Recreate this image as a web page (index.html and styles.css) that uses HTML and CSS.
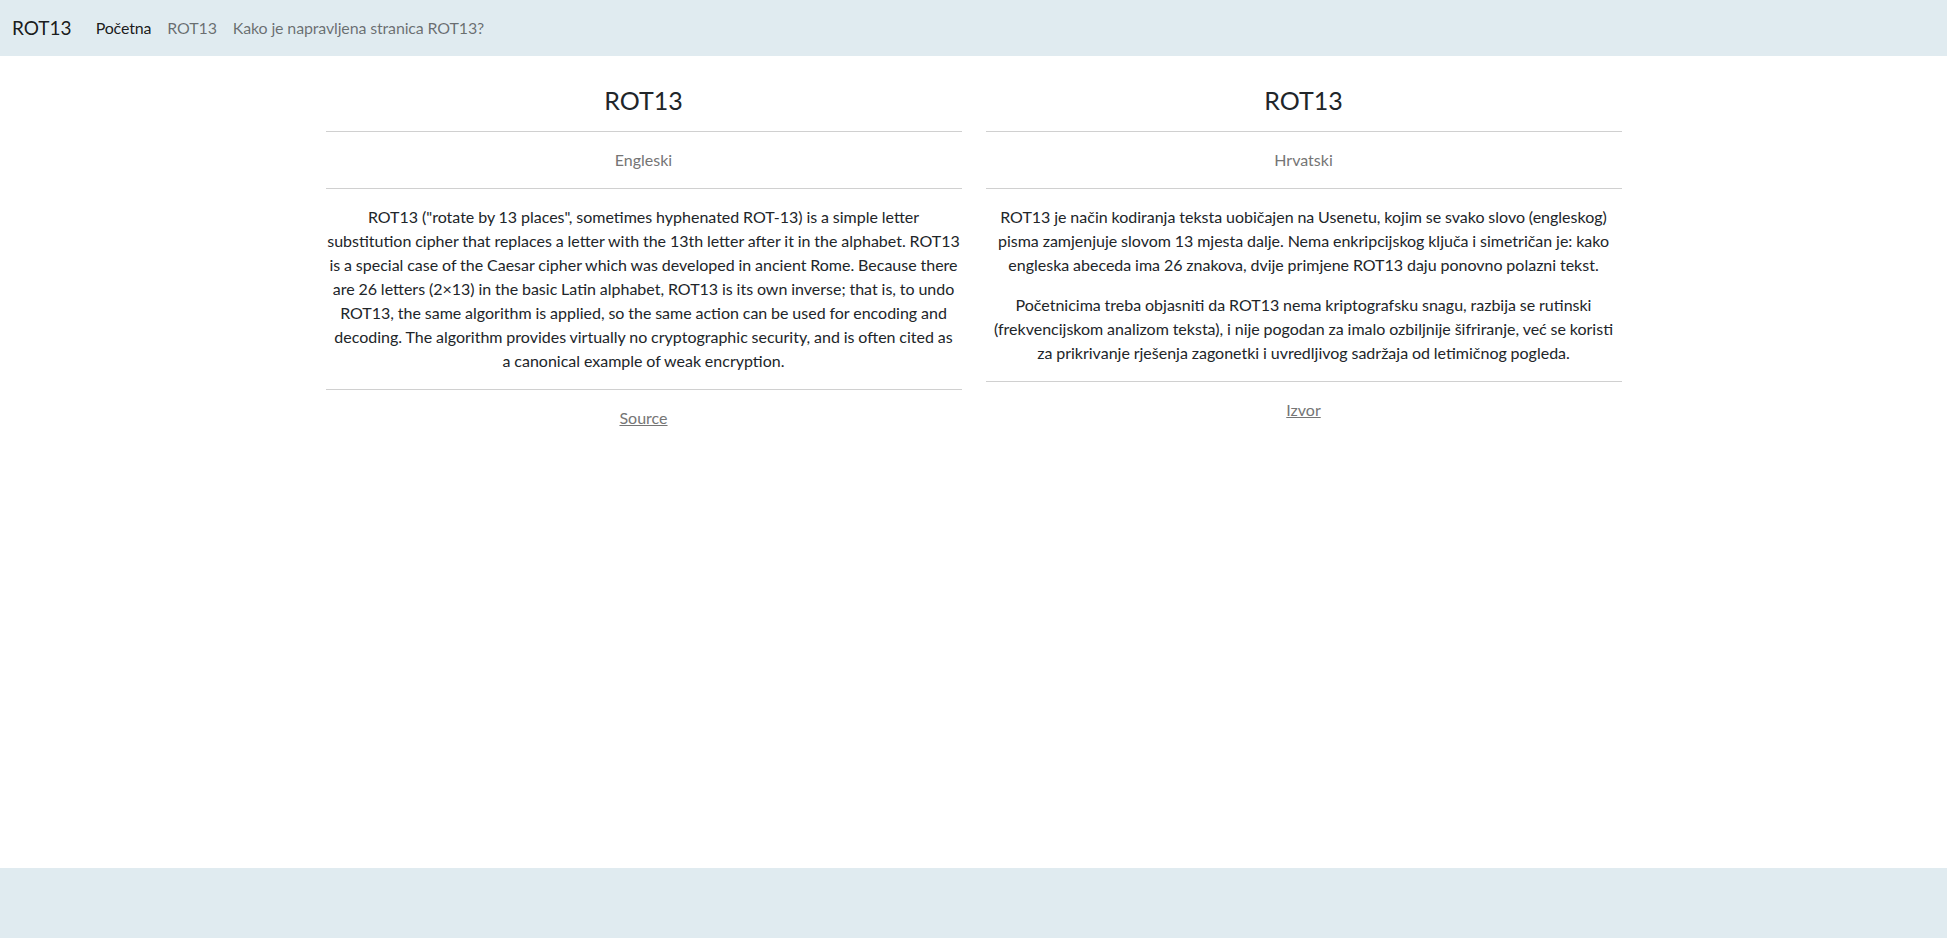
FILE: index.html
```html
<!DOCTYPE html>
<html lang="hr">
<head>
    <meta charset="UTF-8">
    <meta name="viewport" content="width=device-width, initial-scale=1.0">
    <title>ROT13</title>
    <link rel="stylesheet" href="styles.css">
</head>
<body>
    <nav class="navbar">
        <a class="brand" href="#">ROT13</a>
        <ul class="nav-links">
            <li><a class="nav-link active" href="#">Početna</a></li>
            <li><a class="nav-link" href="#">ROT13</a></li>
            <li><a class="nav-link" href="#">Kako je napravljena stranica ROT13?</a></li>
        </ul>
    </nav>

    <main class="container">
        <div class="row">
            <section class="col">
                <h3>ROT13</h3>
                <hr>
                <p class="lang">Engleski</p>
                <hr>
                <p class="text">ROT13 ("rotate by 13 places", sometimes hyphenated ROT-13) is a simple letter substitution cipher that replaces a letter with the 13th letter after it in the alphabet. ROT13 is a special case of the Caesar cipher which was developed in ancient Rome. Because there are 26 letters (2×13) in the basic Latin alphabet, ROT13 is its own inverse; that is, to undo ROT13, the same algorithm is applied, so the same action can be used for encoding and decoding. The algorithm provides virtually no cryptographic security, and is often cited as a&nbsp;canonical example of weak encryption.</p>
                <hr>
                <a class="source" href="#">Source</a>
            </section>
            <section class="col">
                <h3>ROT13</h3>
                <hr>
                <p class="lang">Hrvatski</p>
                <hr>
                <p class="text">ROT13 je način kodiranja teksta uobičajen na Usenetu, kojim se svako slovo (engleskog) pisma zamjenjuje slovom 13 mjesta dalje. Nema enkripcijskog ključa i simetričan je: kako engleska abeceda ima 26 znakova, dvije primjene ROT13 daju ponovno polazni tekst.</p>
                <p class="text">Početnicima treba objasniti da ROT13 nema kriptografsku snagu, razbija se rutinski (frekvencijskom analizom teksta), i nije pogodan za imalo ozbiljnije šifriranje, već se koristi za prikrivanje rješenja zagonetki i uvredljivog sadržaja od letimičnog pogleda.</p>
                <hr>
                <a class="source" href="#">Izvor</a>
            </section>
        </div>
    </main>

    <footer class="footer"></footer>
</body>
</html>
```

FILE: styles.css
```css
* {
    box-sizing: border-box;
}

body {
    font-family: "Segoe UI", Lato, "Liberation Sans", sans-serif;
    font-size: 16px;
    line-height: 1.5;
    color: #212529;
    background-color: #fff;
    margin: 0;
    min-height: 100vh;
    display: flex;
    flex-direction: column;
}

a {
    text-decoration: none;
}

.navbar {
    background-color: #e0ebf0;
    height: 56px;
    display: flex;
    align-items: center;
    padding: 0 12px;
}

.brand {
    font-size: 19px;
    color: rgba(0, 0, 0, 0.9);
    margin-right: 16px;
}

.nav-links {
    display: flex;
    list-style: none;
    margin: 0;
    padding: 0;
}

.nav-link {
    display: block;
    padding: 8px;
    color: rgba(0, 0, 0, 0.55);
    letter-spacing: -0.15px;
}

.nav-link.active {
    color: rgba(0, 0, 0, 0.9);
}

.container {
    flex: 1;
    width: 100%;
    max-width: 1320px;
    margin: 0 auto;
    padding: 0 12px;
}

.row {
    display: grid;
    grid-template-columns: 1fr 1fr;
    column-gap: 24px;
    align-items: start;
}

.col {
    text-align: center;
    padding-top: 29px;
}

.col h3 {
    font-size: 25px;
    font-weight: 400;
    line-height: 1.2;
    margin: 0 0 8px;
}

.col hr {
    border: 0;
    border-top: 1px solid #d0d0d0;
    margin: 16px 0;
}

.col .lang {
    color: #757575;
    margin: 0;
}

.col .text {
    margin: 0 0 16px;
    word-spacing: -0.26px;
}

.col .text + hr {
    margin-top: 0;
}

.source {
    color: #757575;
    text-decoration: underline;
}

.footer {
    height: 70px;
    background-color: #e0ebf0;
}
```
